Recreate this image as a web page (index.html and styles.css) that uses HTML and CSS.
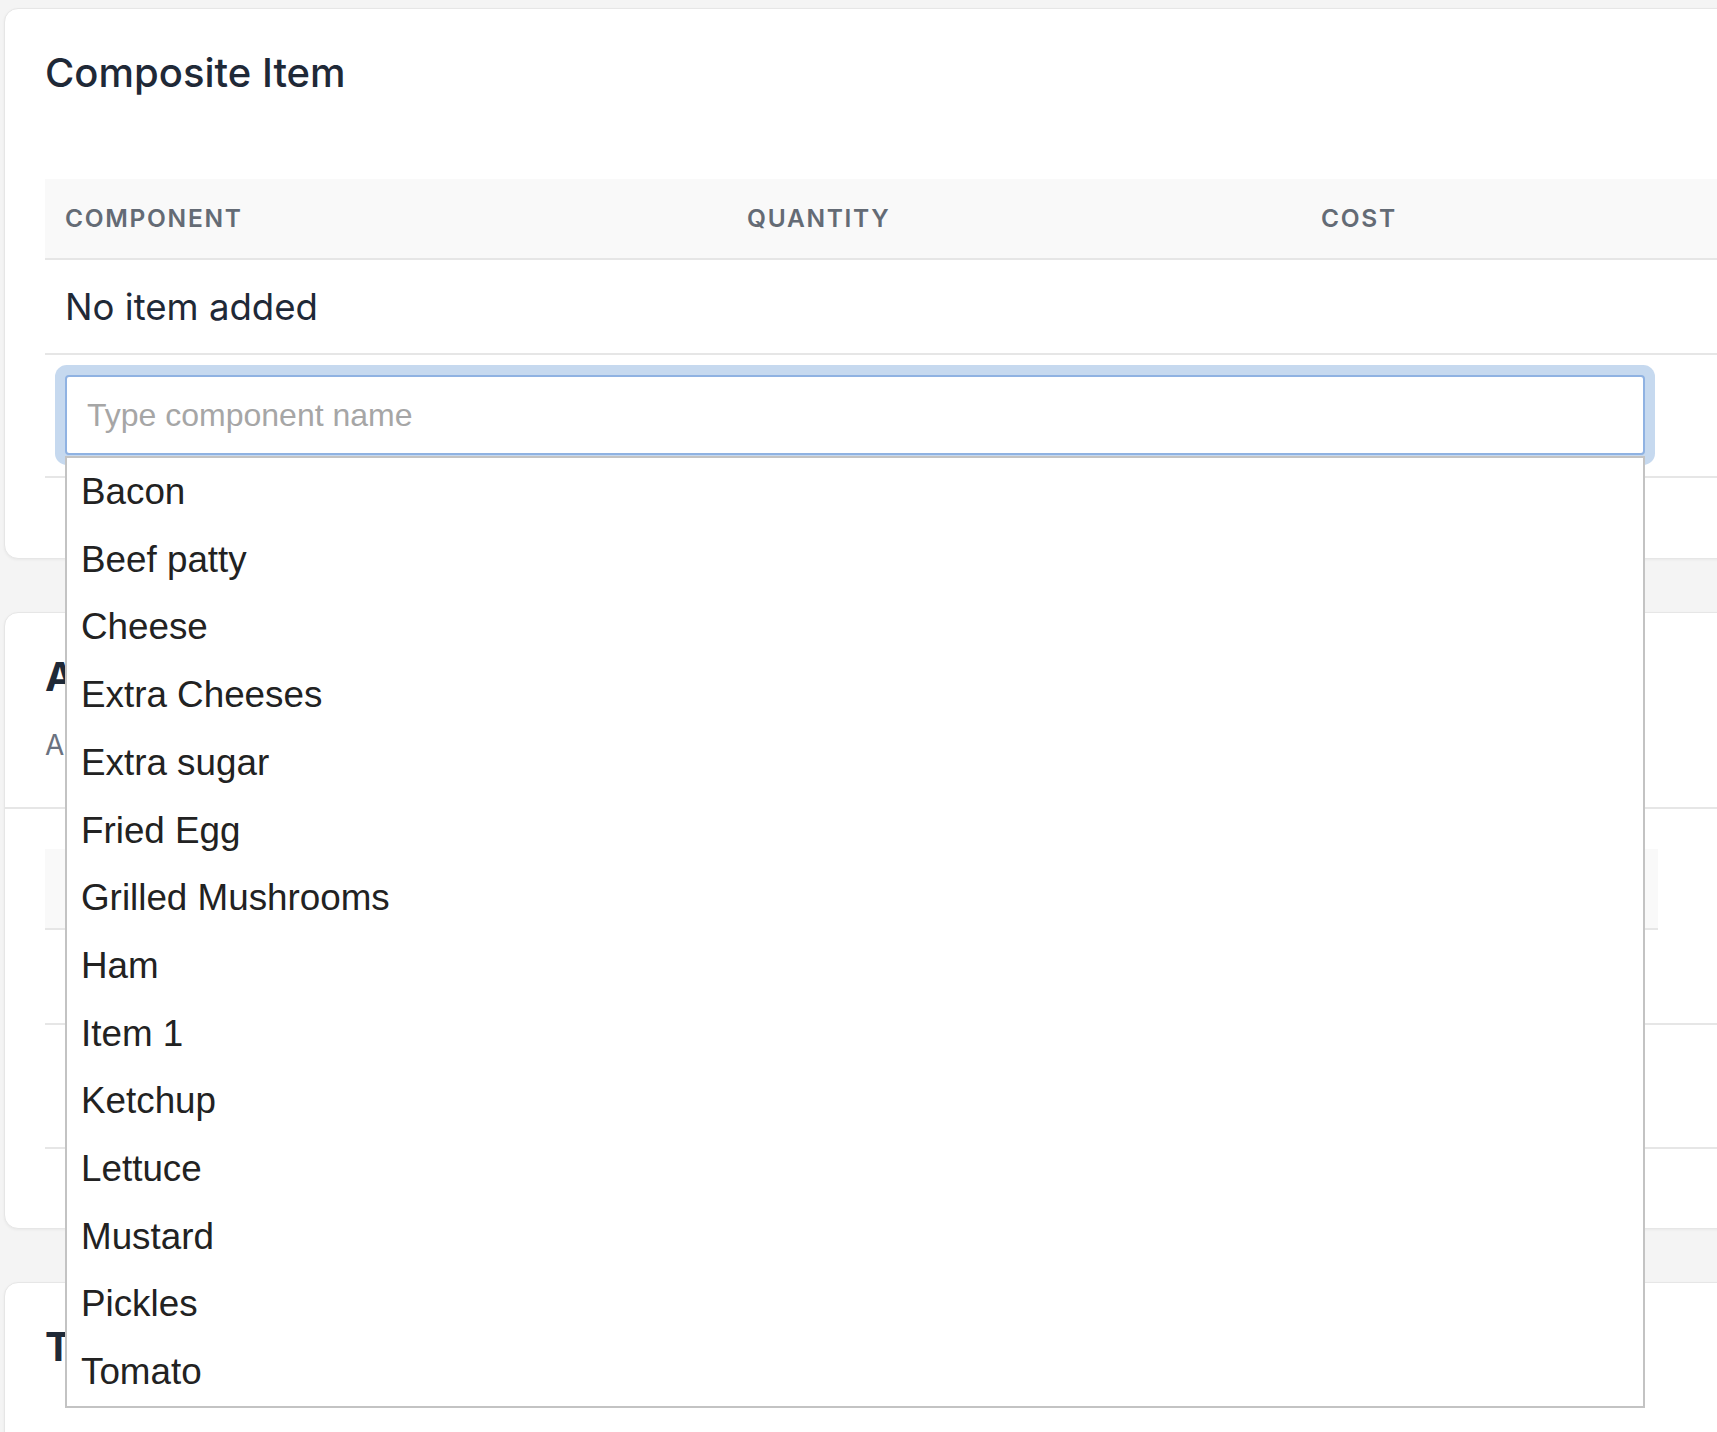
FILE: index.html
```html
<!DOCTYPE html>
<html lang="en">
<head>
<meta charset="utf-8">
<title>Composite Item</title>
<link rel="stylesheet" href="styles.css">
</head>
<body>
<div class="page">
  <section class="card card-composite">
    <h2 class="card-title">Composite Item</h2>
    <div class="table">
      <div class="thead">
        <div class="th">Component</div>
        <div class="th">Quantity</div>
        <div class="th">Cost</div>
      </div>
      <div class="row row-empty">No item added</div>
      <div class="row row-input">
        <div class="combo">
          <input class="combo-input" type="text" placeholder="Type component name">
          <ul class="combo-list">
            <li>Bacon</li>
            <li>Beef patty</li>
            <li>Cheese</li>
            <li>Extra Cheeses</li>
            <li>Extra sugar</li>
            <li>Fried Egg</li>
            <li>Grilled Mushrooms</li>
            <li>Ham</li>
            <li>Item 1</li>
            <li>Ketchup</li>
            <li>Lettuce</li>
            <li>Mustard</li>
            <li>Pickles</li>
            <li>Tomato</li>
          </ul>
        </div>
      </div>
    </div>
  </section>

  <section class="card card-addons">
    <div class="card-head">
      <h2 class="card-title bold">A</h2>
      <p class="card-sub">A</p>
    </div>
    <div class="card-body">
      <div class="thead short">
        <div class="th"></div>
        <div class="th"></div>
        <div class="th"></div>
      </div>
      <div class="row row-short"></div>
      <div class="row row-tall"></div>
    </div>
  </section>

  <section class="card card-last">
    <h2 class="card-title bold">T</h2>
  </section>
</div>
</body>
</html>
```

FILE: styles.css
```css
* {
  box-sizing: border-box;
}

html,
body {
  margin: 0;
  overflow: hidden;
}

body {
  background: #f4f4f4;
  font-family: Inter, "Noto Sans", sans-serif;
  color: #1f2937;
}

.page {
  width: 1820px;
  padding: 8px 0 0 4px;
  display: flex;
  flex-direction: column;
  gap: 53px;
}

.card {
  background: #ffffff;
  border: 1px solid #e6e6e6;
  border-radius: 14px;
  box-shadow: 0 1px 3px rgba(0, 0, 0, 0.05);
}

.card-composite {
  padding: 40px 40px 80px;
}

.card-title {
  margin: 0;
  font-size: 40px;
  line-height: 48px;
  font-weight: 500;
  color: #1f2937;
}

.card-title.bold {
  font-weight: 700;
}

.card-composite .card-title {
  margin-bottom: 82px;
}

.thead {
  display: grid;
  grid-template-columns: 682px 574px 1fr;
  background: #f9f9f9;
  border-bottom: 2px solid #e6e6e6;
  min-height: 81px;
}

.thead.short {
  width: 1613px;
}

.th {
  padding: 25px 20px;
  font-size: 24.5px;
  line-height: 29px;
  font-weight: 600;
  letter-spacing: 1.7px;
  text-transform: uppercase;
  color: #646b75;
}

.row {
  border-bottom: 2px solid #e6e6e6;
}

.row-empty {
  padding: 25px 20px 24px;
  font-size: 36.6px;
  line-height: 44px;
  color: #1f2937;
}

.row-short {
  height: 95px;
}

.row-input {
  padding: 20px 20px 21px;
}

.row-tall {
  height: 124px;
}

.combo {
  position: relative;
  width: 1580px;
}

.combo-input {
  display: block;
  width: 100%;
  height: 80px;
  margin: 0;
  border: 2px solid #8fb2e2;
  border-radius: 4px;
  box-shadow: 0 0 0 10px #c6d9ef;
  padding: 0 20px;
  font-family: "Liberation Sans", Arial, sans-serif;
  font-size: 32px;
  color: #222222;
  background: #ffffff;
  outline: none;
}

.combo-input::placeholder {
  color: #a6a6a6;
  opacity: 1;
}

.combo-list {
  position: absolute;
  top: 81px;
  left: 0;
  width: 100%;
  margin: 0;
  padding: 0;
  list-style: none;
  background: #ffffff;
  border: 2px solid #c3c3c3;
  z-index: 10;
}

.combo-list li {
  padding: 13px 14px;
  font-family: "Liberation Sans", Arial, sans-serif;
  font-size: 36.8px;
  line-height: 41.7px;
  color: #222222;
}

.card-addons {
  padding: 0 0 79px;
}

.card-head {
  padding: 40px 40px 45px;
  border-bottom: 2px solid #e6e6e6;
}

.card-sub {
  margin: 27px 0 0;
  font-size: 28px;
  line-height: 34px;
  color: #6b7280;
}

.card-body {
  padding: 40px 40px 0;
}

.card-last {
  padding: 40px 40px 200px;
}
```
